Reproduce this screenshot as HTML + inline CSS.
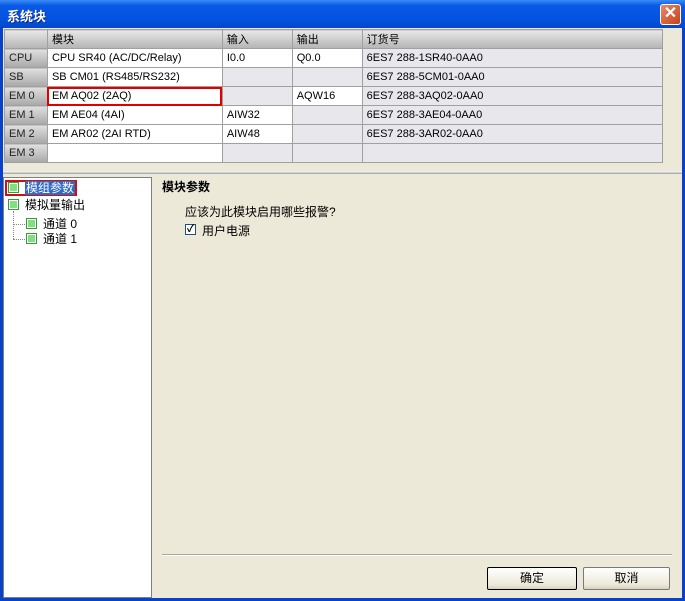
<!DOCTYPE html><html><head><meta charset="utf-8"><style>
*{margin:0;padding:0;box-sizing:border-box}
body{width:685px;height:601px;overflow:hidden;background:#0842c8;font-family:"Liberation Sans","Noto Sans CJK SC",sans-serif;font-size:11px;position:relative}
.abs{position:absolute}
#title{left:0;top:0;width:685px;height:28px;background:linear-gradient(#3a8cf5,#0a5ae6 20%,#0352e0 70%,#0447c8);}
#title span{position:absolute;left:7px;top:6px;color:#fff;font-weight:bold;font-size:13px;text-shadow:1px 1px #0a2a80}
#close{left:660px;top:4px;width:21px;height:21px;border:1px solid #fff;border-radius:3px;background:linear-gradient(135deg,#e88a6a,#c8401c);color:#fff;font-size:16px;text-align:center;line-height:18px;font-weight:bold}
#client{left:3px;top:28px;width:679px;height:570px;background:#ece9d8}
table{position:absolute;left:1px;top:1px;border-collapse:collapse;width:659px}
td{height:19px;border:1px solid #a0a0a0;padding:0 4px;white-space:nowrap;background:#e8e8ec;color:#000}
tr.h td{background:linear-gradient(#e8e8e8,#b4b4b4);}
td.rh{background:linear-gradient(#e0e0e0,#a8a8a8);color:#222}
td.w{background:#fff}
#sep{left:0;top:143px;width:679px;height:3px;background:linear-gradient(#fff,#a0a0a0)}
#tree{left:0;top:149px;width:149px;height:421px;background:#fff;border:1px solid #7f7f7f}
.ti{position:absolute;font-size:12px;height:15px;line-height:15px}
.ic{display:inline-block;width:11px;height:11px;border:1px solid #3a9a3a;background:#7ee07e;vertical-align:-1px;margin-right:6px;box-shadow:inset 0 0 0 1px #fff}
.btn{position:absolute;top:539px;height:23px;border:1px solid #000;border-radius:2px;background:linear-gradient(#fff,#ece9d8 80%,#d6d0c0);text-align:center;line-height:21px;font-size:12px}
</style></head><body>
<div id="title" class="abs"><span>系统块</span></div>
<div id="close" class="abs">✕</div>
<div id="client" class="abs">
<table>
<colgroup><col style="width:43px"><col style="width:175px"><col style="width:70px"><col style="width:70px"><col style="width:301px"></colgroup>
<tr class="h"><td></td><td>模块</td><td>输入</td><td>输出</td><td>订货号</td></tr>
<tr><td class="rh">CPU</td><td class="w">CPU SR40 (AC/DC/Relay)</td><td class="w">I0.0</td><td class="w">Q0.0</td><td>6ES7 288-1SR40-0AA0</td></tr>
<tr><td class="rh">SB</td><td class="w">SB CM01 (RS485/RS232)</td><td></td><td></td><td>6ES7 288-5CM01-0AA0</td></tr>
<tr><td class="rh">EM 0</td><td class="w" style="outline:2px solid #e00000;outline-offset:-2px">EM AQ02 (2AQ)</td><td></td><td class="w">AQW16</td><td>6ES7 288-3AQ02-0AA0</td></tr>
<tr><td class="rh">EM 1</td><td class="w">EM AE04 (4AI)</td><td class="w">AIW32</td><td></td><td>6ES7 288-3AE04-0AA0</td></tr>
<tr><td class="rh">EM 2</td><td class="w">EM AR02 (2AI RTD)</td><td class="w">AIW48</td><td></td><td>6ES7 288-3AR02-0AA0</td></tr>
<tr><td class="rh">EM 3</td><td class="w"></td><td></td><td></td><td></td></tr>
</table>
<div id="sep" class="abs"></div>
<div id="tree" class="abs">
<div class="abs" style="left:1px;top:2px;width:72px;height:16px;border:2px solid #d01010"></div>
<div class="ti" style="left:4px;top:3px"><span class="ic"></span><span style="background:#316ac5;color:#fff;padding:0 1px">模组参数</span></div>
<div class="ti" style="left:4px;top:20px"><span class="ic"></span>模拟量输出</div>
<div class="abs" style="left:9px;top:33px;width:1px;height:28px;border-left:1px dotted #888"></div>
<div class="abs" style="left:9px;top:46px;width:12px;border-top:1px dotted #888"></div>
<div class="abs" style="left:9px;top:61px;width:12px;border-top:1px dotted #888"></div>
<div class="ti" style="left:22px;top:39px"><span class="ic"></span>通道 0</div>
<div class="ti" style="left:22px;top:54px"><span class="ic"></span>通道 1</div>
</div>
<div class="abs" style="left:159px;top:150px;font-weight:bold;font-size:12px">模块参数</div>
<div class="abs" style="left:182px;top:175px;font-size:12px">应该为此模块启用哪些报警?</div>
<div class="abs" style="left:182px;top:196px;width:11px;height:11px;border:1px solid #1c5180;background:#fff;font-size:10px;line-height:9px;text-align:center;font-weight:bold">✓</div>
<div class="abs" style="left:199px;top:194px;font-size:12px">用户电源</div>
<div class="abs" style="left:159px;top:526px;width:510px;height:2px;border-top:1px solid #aca899;border-bottom:1px solid #fff"></div>
<div class="btn" style="left:484px;width:90px">确定</div>
<div class="btn" style="left:580px;width:87px;border-color:#7a7a7a">取消</div>
</div>
</body></html>
